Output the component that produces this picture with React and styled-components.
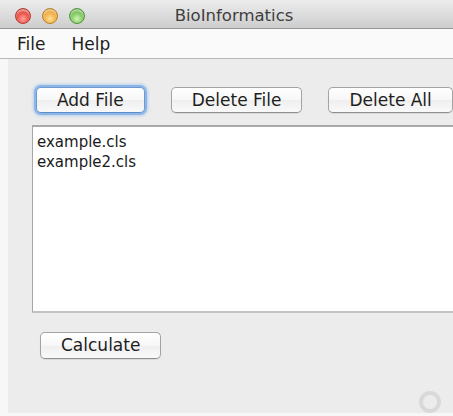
import React from "react";
import styled, { createGlobalStyle } from "styled-components";

const GlobalStyle = createGlobalStyle`
  html, body {
    margin: 0;
    padding: 0;
    background: #f7f7f7;
  }
  body {
    font-family: "DejaVu Sans", "Liberation Sans", sans-serif;
    color: #222;
  }
`;

const Window = styled.div`
  width: 453px;
  height: 416px;
  display: flex;
  flex-direction: column;
  overflow: hidden;
`;

const TitleBar = styled.div`
  height: 28px;
  flex-shrink: 0;
  display: grid;
  grid-template-columns: 1fr auto 1fr;
  align-items: center;
  padding-left: 15px;
  background: linear-gradient(#ececec, #dadada 60%, #cdcdcd);
  border-bottom: 1px solid #969696;
`;

const Lights = styled.div`
  display: flex;
  gap: 11px;
  margin-top: 3px;
`;

const Light = styled.span`
  width: 16px;
  height: 16px;
  border-radius: 50%;
  box-sizing: border-box;
  border: 1px solid ${(p) => p.edge};
  background: radial-gradient(
    circle at 50% 70%,
    ${(p) => p.glow} 0%,
    ${(p) => p.color} 55%,
    ${(p) => p.edge} 100%
  );
  box-shadow: inset 0 2px 2px rgba(255, 255, 255, 0.55);
`;

const Title = styled.div`
  font-size: 16.5px;
  color: #3e3e3e;
  margin-top: 2px;
`;

const MenuBar = styled.div`
  height: 29px;
  flex-shrink: 0;
  display: flex;
  align-items: center;
  gap: 26px;
  padding-left: 17px;
  background: #fafafa;
  border-bottom: 1px solid #b9b9b9;
`;

const MenuItem = styled.span`
  font-size: 17px;
  color: #1e1e1e;
`;

const Body = styled.div`
  flex: 1;
  display: flex;
  padding: 0 0 3px 8px;
  min-height: 0;
`;

const Panel = styled.div`
  flex: 1;
  display: flex;
  flex-direction: column;
  padding: 28px 0 0 24px;
  background: #ececec;
  overflow: hidden;
`;

const ButtonRow = styled.div`
  display: flex;
  gap: 26px;
  margin-left: 4px;
`;

const Button = styled.button`
  flex-shrink: 0;
  height: ${(p) => (p.tall ? 27 : 26)}px;
  padding: 0 20px;
  font-family: inherit;
  font-size: 17px;
  color: #1e1e1e;
  border: 1px solid ${(p) => (p.focused ? "#6e98cf" : "#a3a3a3")};
  border-bottom-color: ${(p) => (p.focused ? "#5f8cc8" : "#8e8e8e")};
  border-radius: 5px;
  background: linear-gradient(#ffffff, #f7f7f7 50%, #efefef 52%, #f9f9f9);
  box-shadow: ${(p) =>
    p.focused
      ? "0 0 0 2px #8ab6ea, 0 0 3px 3px rgba(120, 170, 230, 0.45)"
      : "0 1px 1px rgba(0, 0, 0, 0.08)"};
  line-height: 1;
`;

const FileList = styled.div`
  margin: 12px -12px 0 0;
  height: 188px;
  box-sizing: border-box;
  padding: 5px 4px;
  background: #fff;
  border-top: 2px solid #a9a9a9;
  border-left: 1px solid #a6a6a6;
  border-bottom: 2px solid #c3c3c3;
`;

const FileItem = styled.div`
  font-size: 15px;
  line-height: 20px;
  color: #1a1a1a;
`;

const CalcButton = styled(Button)`
  align-self: flex-start;
  margin: 19px 0 0 8px;
`;

const Spinner = styled.div`
  margin-top: auto;
  align-self: flex-end;
  margin-right: 12px;
  width: 22px;
  height: 22px;
  box-sizing: border-box;
  border-radius: 50%;
  border: 4px solid #d9d9d9;
`;

const files = ["example.cls", "example2.cls"];

export default function App() {
  return (
    <>
      <GlobalStyle />
      <Window>
        <TitleBar>
          <Lights>
            <Light color="#e8493f" glow="#ffa39a" edge="#b23a33" />
            <Light color="#f0a93a" glow="#ffe09a" edge="#b98125" />
            <Light color="#79c257" glow="#d2f5b5" edge="#4f953a" />
          </Lights>
          <Title>BioInformatics</Title>
          <span />
        </TitleBar>
        <MenuBar>
          <MenuItem>File</MenuItem>
          <MenuItem>Help</MenuItem>
        </MenuBar>
        <Body>
          <Panel>
            <ButtonRow>
              <Button focused>Add File</Button>
              <Button>Delete File</Button>
              <Button>Delete All</Button>
            </ButtonRow>
            <FileList>
              {files.map((f) => (
                <FileItem key={f}>{f}</FileItem>
              ))}
            </FileList>
            <CalcButton tall>Calculate</CalcButton>
            <Spinner />
          </Panel>
        </Body>
      </Window>
    </>
  );
}
